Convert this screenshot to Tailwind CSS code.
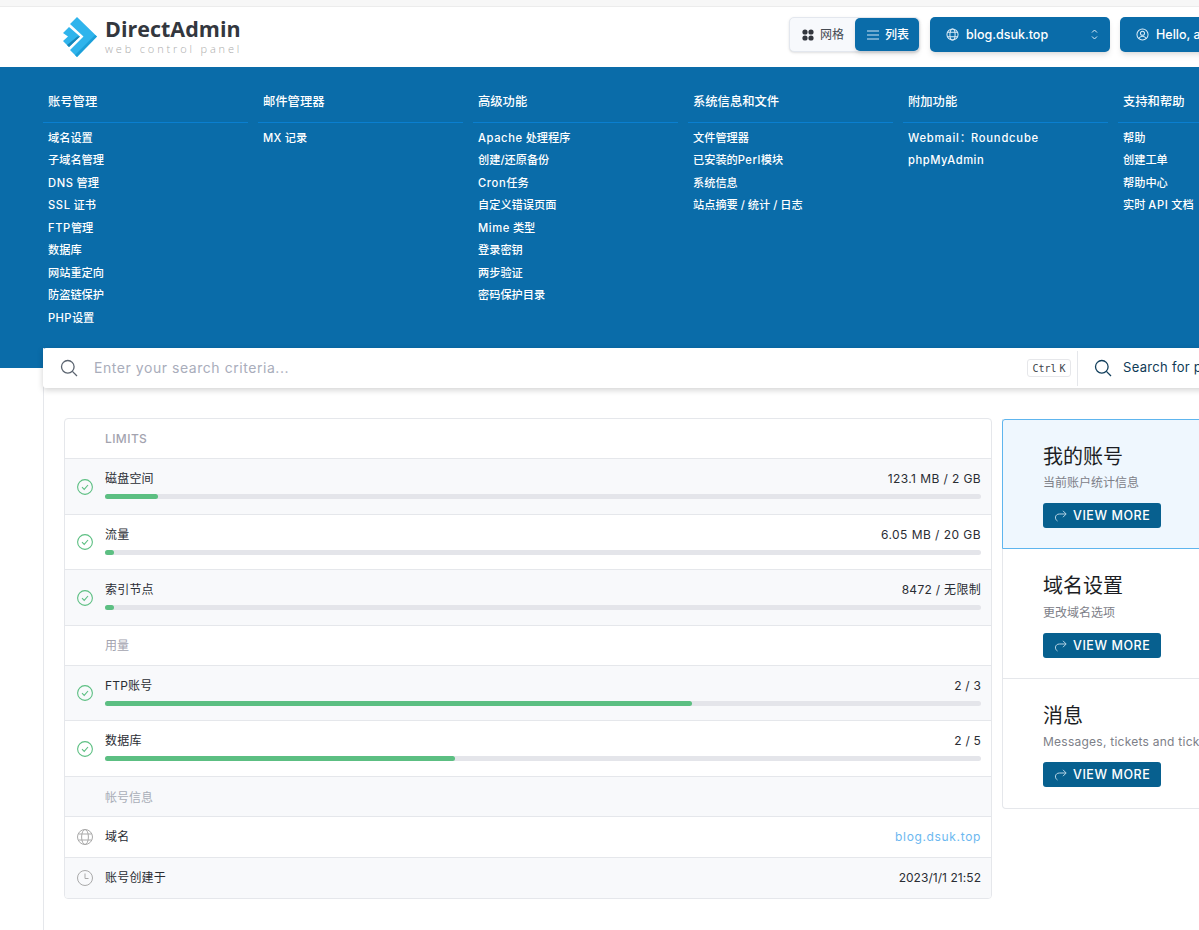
<!DOCTYPE html>
<html lang="zh-CN">
<head>
<meta charset="utf-8">
<title>DirectAdmin</title>
<script src="https://cdn.jsdelivr.net/npm/@tailwindcss/browser@4"></script>
</head>
<body class="bg-white font-['Inter','Noto_Sans_CJK_SC',sans-serif] text-[#2a2d34]">
<div class="w-[1199px] h-[930px] overflow-hidden">

  <div class="h-[7px] bg-[#f7f7f7] border-b border-[#ececec]"></div>

  <header class="h-[60px] bg-white flex items-start pl-[62px]">
    <div class="flex items-start mt-[10px]">
      <svg class="w-[37px] h-[40px] flex-none" viewBox="0 0 37 40">
        <polygon points="15,0 35,19.5 15,40 8,33 21.5,19.5 8,7" fill="#2fb4ec"/>
        <polygon points="1,16 7,10 18,19.5 7,30 1,24 6,19.5" fill="#2fb4ec"/>
        <polygon points="35,19.5 15,40 13,38 33,18" fill="#1c9fd8"/>
        <polygon points="7,30 18,19.5 15.5,19.5 5,28" fill="#1786b8"/>
      </svg>
      <div class="ml-[6px] w-[140px]">
        <div class="text-[21.5px] leading-[24px] font-bold text-[#33373e] font-['Open_Sans',sans-serif] whitespace-nowrap">DirectAdmin</div>
        <div class="mt-[2px] text-[11px] leading-[12px] text-[#ababab] font-['Open_Sans',sans-serif] tracking-[2.85px] whitespace-nowrap font-light">web control panel</div>
      </div>
    </div>

    <div class="ml-auto mt-[10px] flex gap-[10px] w-[410px] flex-none">
      <div class="w-[131px] h-[35px] flex-none flex items-stretch rounded-[5px] bg-[#f7f9fc] border border-[#e3e7ee] shadow-sm">
        <div class="w-[65px] flex items-center pl-[12px] gap-[6px] text-[12px] text-[#454a52]">
          <svg class="w-[12px] h-[12px] flex-none" viewBox="0 0 12 12" fill="#33373e"><circle cx="3" cy="3" r="2.6"/><circle cx="9" cy="3" r="2.6"/><circle cx="3" cy="9" r="2.6"/><circle cx="9" cy="9" r="2.6"/></svg>
          <span>网格</span>
        </div>
        <div class="flex-1 flex items-center pl-[12px] gap-[6px] bg-[#0a6ca9] rounded-[5px] text-[12px] font-medium text-white shadow-md">
          <svg class="w-[12px] h-[10px] flex-none" viewBox="0 0 12 10" stroke="#cfe4f3" stroke-width="1"><path d="M0 1h12M0 5h12M0 9h12"/></svg>
          <span>列表</span>
        </div>
      </div>
      <div class="w-[180px] h-[35px] flex-none flex items-center pl-[16px] pr-[12px] bg-[#0a6ca9] rounded-[5px] text-white shadow-md">
        <svg class="w-[13px] h-[13px] flex-none" viewBox="0 0 14 14" fill="none" stroke="#dcecf7" stroke-width="1.1"><circle cx="7" cy="7" r="6"/><ellipse cx="7" cy="7" rx="2.8" ry="6"/><path d="M1.6 4.6h10.8M1.6 9.4h10.8"/></svg>
        <span class="ml-[7px] text-[12.5px] font-medium pt-[1px]">blog.dsuk.top</span>
        <svg class="ml-auto w-[7px] h-[11px] flex-none" viewBox="0 0 7 11" fill="none" stroke="#dcecf7" stroke-width="1"><path d="M1 3.5L3.5 1 6 3.5M1 7.5L3.5 10 6 7.5"/></svg>
      </div>
      <div class="w-[120px] h-[35px] flex-none flex items-center pl-[16px] bg-[#0a6ca9] rounded-l-[5px] text-white shadow-md whitespace-nowrap overflow-hidden">
        <svg class="w-[13px] h-[13px] flex-none" viewBox="0 0 14 14" fill="none" stroke="#dcecf7" stroke-width="1.1"><circle cx="7" cy="7" r="6"/><circle cx="7" cy="5.6" r="2.2"/><path d="M3 11.4c1-2 2.4-2.6 4-2.6s3 .6 4 2.6"/></svg>
        <span class="ml-[7px] text-[12.5px] font-medium pt-[1px]">Hello, a</span>
      </div>
    </div>
  </header>

  <nav class="h-[301px] bg-[#0a6ca9] pt-[22px] pl-[43px] text-white overflow-hidden">
    <div class="grid grid-cols-[205px_205px_205px_205px_205px_205px] gap-x-[10px] w-[1300px]">
      <div>
        <div class="h-[34px] pl-[5px] pt-[1px] text-[12.3px] leading-[24px] font-medium border-b border-[#0a7fd0]">账号管理</div>
        <ul class="mt-[3.7px] pl-[5px] text-[11.2px] font-medium leading-[22.5px]">
          <li>域名设置</li><li>子域名管理</li><li><span class="tracking-[0.6px]">DNS</span> 管理</li><li><span class="tracking-[0.6px]">SSL</span> 证书</li><li><span class="tracking-[0.6px]">FTP</span>管理</li><li>数据库</li><li>网站重定向</li><li>防盗链保护</li><li><span class="tracking-[0.4px]">PHP</span>设置</li>
        </ul>
      </div>
      <div>
        <div class="h-[34px] pl-[5px] pt-[1px] text-[12.3px] leading-[24px] font-medium border-b border-[#0a7fd0]">邮件管理器</div>
        <ul class="mt-[3.7px] pl-[5px] text-[11.2px] font-medium leading-[22.5px]">
          <li><span class="tracking-[0.4px]">MX</span> 记录</li>
        </ul>
      </div>
      <div>
        <div class="h-[34px] pl-[5px] pt-[1px] text-[12.3px] leading-[24px] font-medium border-b border-[#0a7fd0]">高级功能</div>
        <ul class="mt-[3.7px] pl-[5px] text-[11.2px] font-medium leading-[22.5px]">
          <li><span class="tracking-[0.6px]">Apache</span> 处理程序</li><li>创建/还原备份</li><li><span class="tracking-[0.6px]">Cron</span>任务</li><li>自定义错误页面</li><li><span class="tracking-[0.6px]">Mime</span> 类型</li><li>登录密钥</li><li>两步验证</li><li>密码保护目录</li>
        </ul>
      </div>
      <div>
        <div class="h-[34px] pl-[5px] pt-[1px] text-[12.3px] leading-[24px] font-medium border-b border-[#0a7fd0]">系统信息和文件</div>
        <ul class="mt-[3.7px] pl-[5px] text-[11.2px] font-medium leading-[22.5px]">
          <li>文件管理器</li><li>已安装的<span class="tracking-[0.5px]">Perl</span>模块</li><li>系统信息</li><li>站点摘要 / 统计 / 日志</li>
        </ul>
      </div>
      <div>
        <div class="h-[34px] pl-[5px] pt-[1px] text-[12.3px] leading-[24px] font-medium border-b border-[#0a7fd0]">附加功能</div>
        <ul class="mt-[3.7px] pl-[5px] text-[11.2px] font-medium leading-[22.5px]">
          <li><span class="tracking-[0.8px]">Webmail</span>：<span class="tracking-[0.8px]">Roundcube</span></li><li class="tracking-[0.55px]">phpMyAdmin</li>
        </ul>
      </div>
      <div>
        <div class="h-[34px] pl-[5px] pt-[1px] text-[12.3px] leading-[24px] font-medium border-b border-[#0a7fd0]">支持和帮助</div>
        <ul class="mt-[3.7px] pl-[5px] text-[11.2px] font-medium leading-[22.5px]">
          <li>帮助</li><li>创建工单</li><li>帮助中心</li><li>实时 <span class="tracking-[0.6px]">API</span> 文档</li>
        </ul>
      </div>
    </div>
  </nav>

  <main class="ml-[43px] w-[1300px] h-[600px] border-l border-[#e5e7eb] -mt-[20px]">
    <div class="relative z-10 -ml-px w-[1300px] h-[40px] flex items-center bg-white rounded-[3px] shadow-[0_2px_6px_rgba(0,0,0,0.18)]">
      <svg class="ml-[17px] w-[18px] h-[18px] flex-none" viewBox="0 0 18 18" fill="none" stroke="#5b6470" stroke-width="1.3"><circle cx="7.8" cy="7.8" r="6.3"/><path d="M12.4 12.4L17 17"/></svg>
      <span class="ml-[16px] w-[933px] flex-none text-[14px] leading-[18px] pb-[1px] text-[#a9adbb] tracking-[0.55px]">Enter your search criteria...</span>
      <kbd class="w-[44px] h-[18px] flex-none flex items-center justify-center gap-[3px] border border-[#e6e7ea] rounded-[3px] font-['DejaVu_Sans_Mono','Liberation_Mono',monospace] text-[10px] text-[#40444c]"><span>Ctrl</span><span>K</span></kbd>
      <div class="ml-[6px] h-[35px] w-px bg-[#e5e7eb] flex-none"></div>
      <svg class="ml-[16px] w-[18px] h-[18px] flex-none" viewBox="0 0 18 18" fill="none" stroke="#123f5c" stroke-width="1.3"><circle cx="7.8" cy="7.8" r="6.3"/><path d="M12.4 12.4L17 17"/></svg>
      <span class="ml-[11px] text-[13px] text-[#0f3b57] tracking-[0.3px] whitespace-nowrap">Search for p</span>
    </div>

    <div class="mt-[30px] ml-[20px] flex items-start gap-[10px]">
      <section class="w-[928px] flex-none border border-[#e5e7eb] rounded-[4px] overflow-hidden text-[12px]">
        <div class="h-[40px] flex items-center pl-[40px] pt-[1px] border-b border-[#e5e7eb] text-[12px] text-[#a3a3af] font-medium tracking-[0.4px]">LIMITS</div>

        <div class="h-[56px] flex items-center border-b border-[#e5e7eb] bg-[#f8f9fb]">
          <div class="w-[40px] flex-none flex justify-center">
            <svg class="w-[16px] h-[16px]" viewBox="0 0 16 16" fill="none" stroke="#5cbf82" stroke-width="1.1"><circle cx="8" cy="8" r="7.4"/><path d="M5 8.2l2.2 2.2L11 6"/></svg>
          </div>
          <div class="flex-1 pr-[10px] -mt-[3px]">
            <div class="flex justify-between leading-[16px] tracking-[0.2px]"><span>磁盘空间</span><span class="tracking-[0.4px]">123.1 MB / 2 GB</span></div>
            <div class="mt-[7px] h-[5px] rounded-full bg-[#e4e5ea]"><div class="h-full rounded-full bg-[#5cbf82]" style="width:6%"></div></div>
          </div>
        </div>

        <div class="h-[55px] flex items-center border-b border-[#e5e7eb]">
          <div class="w-[40px] flex-none flex justify-center">
            <svg class="w-[16px] h-[16px]" viewBox="0 0 16 16" fill="none" stroke="#5cbf82" stroke-width="1.1"><circle cx="8" cy="8" r="7.4"/><path d="M5 8.2l2.2 2.2L11 6"/></svg>
          </div>
          <div class="flex-1 pr-[10px] -mt-[3px]">
            <div class="flex justify-between leading-[16px] tracking-[0.2px]"><span>流量</span><span class="tracking-[0.45px]">6.05 MB / 20 GB</span></div>
            <div class="mt-[7px] h-[5px] rounded-full bg-[#e4e5ea]"><div class="h-full rounded-full bg-[#5cbf82]" style="width:1%"></div></div>
          </div>
        </div>

        <div class="h-[56px] flex items-center border-b border-[#e5e7eb] bg-[#f8f9fb]">
          <div class="w-[40px] flex-none flex justify-center">
            <svg class="w-[16px] h-[16px]" viewBox="0 0 16 16" fill="none" stroke="#5cbf82" stroke-width="1.1"><circle cx="8" cy="8" r="7.4"/><path d="M5 8.2l2.2 2.2L11 6"/></svg>
          </div>
          <div class="flex-1 pr-[10px] -mt-[3px]">
            <div class="flex justify-between leading-[16px] tracking-[0.2px]"><span>索引节点</span><span class="tracking-[0.3px]">8472 / 无限制</span></div>
            <div class="mt-[7px] h-[5px] rounded-full bg-[#e4e5ea]"><div class="h-full rounded-full bg-[#5cbf82]" style="width:1%"></div></div>
          </div>
        </div>

        <div class="h-[40px] flex items-center pl-[40px] border-b border-[#e5e7eb] text-[#a3a3af]">用量</div>

        <div class="h-[55px] flex items-center border-b border-[#e5e7eb] bg-[#f8f9fb]">
          <div class="w-[40px] flex-none flex justify-center">
            <svg class="w-[16px] h-[16px]" viewBox="0 0 16 16" fill="none" stroke="#5cbf82" stroke-width="1.1"><circle cx="8" cy="8" r="7.4"/><path d="M5 8.2l2.2 2.2L11 6"/></svg>
          </div>
          <div class="flex-1 pr-[10px] -mt-[3px]">
            <div class="flex justify-between leading-[16px] tracking-[0.2px]"><span>FTP账号</span><span>2 / 3</span></div>
            <div class="mt-[7px] h-[5px] rounded-full bg-[#e4e5ea]"><div class="h-full rounded-full bg-[#5cbf82]" style="width:67%"></div></div>
          </div>
        </div>

        <div class="h-[56px] flex items-center border-b border-[#e5e7eb]">
          <div class="w-[40px] flex-none flex justify-center">
            <svg class="w-[16px] h-[16px]" viewBox="0 0 16 16" fill="none" stroke="#5cbf82" stroke-width="1.1"><circle cx="8" cy="8" r="7.4"/><path d="M5 8.2l2.2 2.2L11 6"/></svg>
          </div>
          <div class="flex-1 pr-[10px] -mt-[3px]">
            <div class="flex justify-between leading-[16px] tracking-[0.2px]"><span>数据库</span><span>2 / 5</span></div>
            <div class="mt-[7px] h-[5px] rounded-full bg-[#e4e5ea]"><div class="h-full rounded-full bg-[#5cbf82]" style="width:40%"></div></div>
          </div>
        </div>

        <div class="h-[40px] flex items-center pl-[40px] pt-[2px] border-b border-[#e5e7eb] bg-[#f8f9fb] text-[#a9aeb8]">帐号信息</div>

        <div class="h-[41px] flex items-center border-b border-[#e5e7eb]">
          <div class="w-[40px] flex-none flex justify-center">
            <svg class="w-[16px] h-[16px]" viewBox="0 0 16 16" fill="none" stroke="#a9a9a9" stroke-width="1"><circle cx="8" cy="8" r="7.5"/><ellipse cx="8" cy="8" rx="3.4" ry="7.5"/><path d="M1.4 5h13.2M1.4 11h13.2"/></svg>
          </div>
          <div class="flex-1 pr-[10px] flex justify-between tracking-[0.2px]"><span>域名</span><span class="text-[#6cb8f0] tracking-[0.65px]">blog.dsuk.top</span></div>
        </div>

        <div class="h-[40px] flex items-center bg-[#f8f9fb]">
          <div class="w-[40px] flex-none flex justify-center">
            <svg class="w-[16px] h-[16px]" viewBox="0 0 16 16" fill="none" stroke="#a9a9a9" stroke-width="1"><circle cx="8" cy="8" r="7.5"/><path d="M8 3.5V8.5H11.5"/></svg>
          </div>
          <div class="flex-1 pr-[10px] flex justify-between tracking-[0.2px]"><span>账号创建于</span><span class="tracking-[0.05px]">2023/1/1 21:52</span></div>
        </div>
      </section>

      <section class="w-[300px] flex-none mt-px border border-[#e5e7eb] border-t-0 rounded-b-[4px] whitespace-nowrap">
        <div class="h-[130px] -ml-px -mr-px pl-[40px] pt-[23px] bg-[#eff7fe] border border-[#5eb5ee] rounded-tl-[3px]">
          <div class="text-[20px] leading-[28px] text-[#1c1e24]">我的账号</div>
          <div class="mt-[2px] text-[12px] leading-[20px] text-[#7d8088]">当前账户统计信息</div>
          <button class="mt-[10px] w-[118px] h-[25px] flex items-center pl-[11px] gap-[6px] bg-[#07608f] rounded-[3px] text-[12.5px] font-medium text-white tracking-[0.55px]">
            <svg class="w-[13px] h-[13px] flex-none" viewBox="0 0 13 13" fill="none" stroke="#b6d3e4" stroke-width="1"><path d="M3.5 12C.5 10.5.5 5 5.5 5H12M9 1.8l3.2 3.2L9 8.2"/></svg>
            <span class="pt-[1px]">VIEW MORE</span>
          </button>
        </div>
        <div class="h-[130px] pl-[40px] pt-[23px] border-b border-[#e5e7eb]">
          <div class="text-[20px] leading-[28px] text-[#1c1e24]">域名设置</div>
          <div class="mt-[3px] text-[12px] leading-[20px] text-[#7d8088]">更改域名选项</div>
          <button class="mt-[10px] w-[118px] h-[25px] flex items-center pl-[11px] gap-[6px] bg-[#07608f] rounded-[3px] text-[12.5px] font-medium text-white tracking-[0.55px]">
            <svg class="w-[13px] h-[13px] flex-none" viewBox="0 0 13 13" fill="none" stroke="#b6d3e4" stroke-width="1"><path d="M3.5 12C.5 10.5.5 5 5.5 5H12M9 1.8l3.2 3.2L9 8.2"/></svg>
            <span class="pt-[1px]">VIEW MORE</span>
          </button>
        </div>
        <div class="h-[129px] pl-[40px] pt-[23px]">
          <div class="text-[20px] leading-[28px] text-[#1c1e24]">消息</div>
          <div class="mt-[2px] text-[12px] leading-[20px] text-[#7d8088] tracking-[0.25px]">Messages, tickets and tick</div>
          <button class="mt-[10px] w-[118px] h-[25px] flex items-center pl-[11px] gap-[6px] bg-[#07608f] rounded-[3px] text-[12.5px] font-medium text-white tracking-[0.55px]">
            <svg class="w-[13px] h-[13px] flex-none" viewBox="0 0 13 13" fill="none" stroke="#b6d3e4" stroke-width="1"><path d="M3.5 12C.5 10.5.5 5 5.5 5H12M9 1.8l3.2 3.2L9 8.2"/></svg>
            <span class="pt-[1px]">VIEW MORE</span>
          </button>
        </div>
      </section>
    </div>
  </main>
</div>
</body>
</html>
